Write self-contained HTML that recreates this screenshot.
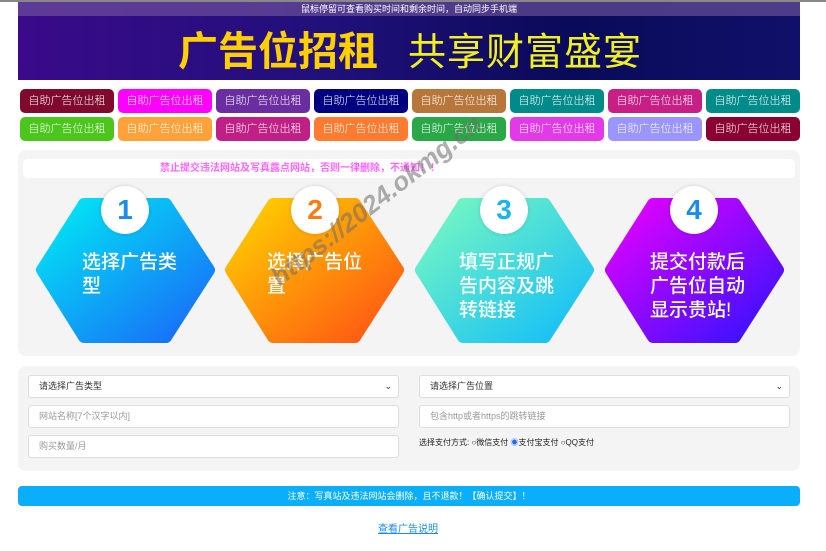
<!DOCTYPE html><html><head><meta charset="utf-8"><style>
*{box-sizing:border-box;margin:0;padding:0}
body{width:826px;height:551px;background:#fff;font-family:"Liberation Sans","Noto Sans CJK SC",sans-serif;position:relative;overflow:hidden}
.a{position:absolute}
.topline{left:0;top:0;width:826px;height:2px;background:#888}
.banner{left:18px;top:2px;width:782px;height:78px;background:linear-gradient(90deg,#3a0a8a,#20107a 40%,#0a0a5a 70%,#10106a);overflow:hidden}
.cap{left:0;top:0;width:782px;height:14px;background:rgba(120,90,160,.6);color:#fff;font-size:9px;text-align:center;line-height:14px}
.bt1{left:160px;top:17px;font-size:40px;font-weight:bold;color:#ffd000;letter-spacing:0px}
.bt2{left:390px;top:19px;font-size:38px;color:#f0f020;letter-spacing:1px}
.btn{position:absolute;width:94px;height:24px;border-radius:5px;color:#fff;font-size:11px;text-align:center;line-height:24px;font-weight:300}
.panel{background:#f4f4f4;border-radius:8px}
.hex{position:absolute}
.ht{position:absolute;color:#fff;font-size:19px;line-height:24px;font-weight:500}
.circ{position:absolute;width:48px;height:48px;border-radius:50%;background:#fff;text-align:center;line-height:48px;font-size:28px;font-weight:bold;box-shadow:0 0 4px rgba(0,0,0,.15)}
.in{position:absolute;height:23px;background:#fff;border:1px solid #ddd;border-radius:3px;font-size:9px;color:#999;line-height:21px;padding-left:10px}
</style></head><body>
<div class="a topline"></div>
<div class="a banner">
<div class="a cap">鼠标停留可查看购买时间和剩余时间，自动同步手机端</div>
<div class="a bt1">广告位招租</div>
<div class="a bt2">共享财富盛宴</div>
</div>
<div class="btn" style="left:20px;top:89px;background:#7f0a2d">自助广告位出租</div>
<div class="btn" style="left:118px;top:89px;background:#ff00ff">自助广告位出租</div>
<div class="btn" style="left:216px;top:89px;background:#6a2ea0">自助广告位出租</div>
<div class="btn" style="left:314px;top:89px;background:#000080">自助广告位出租</div>
<div class="btn" style="left:412px;top:89px;background:#b8773a">自助广告位出租</div>
<div class="btn" style="left:510px;top:89px;background:#008b8b">自助广告位出租</div>
<div class="btn" style="left:608px;top:89px;background:#c71f85">自助广告位出租</div>
<div class="btn" style="left:706px;top:89px;background:#008b8b">自助广告位出租</div>
<div class="btn" style="left:20px;top:117px;background:#4cc61c">自助广告位出租</div>
<div class="btn" style="left:118px;top:117px;background:#ffa23a">自助广告位出租</div>
<div class="btn" style="left:216px;top:117px;background:#c02085">自助广告位出租</div>
<div class="btn" style="left:314px;top:117px;background:#ff7b30">自助广告位出租</div>
<div class="btn" style="left:412px;top:117px;background:#2aa848">自助广告位出租</div>
<div class="btn" style="left:510px;top:117px;background:#e23ae6">自助广告位出租</div>
<div class="btn" style="left:608px;top:117px;background:#9b95ff">自助广告位出租</div>
<div class="btn" style="left:706px;top:117px;background:#8a0030">自助广告位出租</div>

<div class="a panel" style="left:18px;top:150px;width:782px;height:206px"></div>
<div class="a" style="left:23px;top:159px;width:772px;height:19px;background:#fff;border-radius:5px;color:#ff66ff;font-size:10px;font-weight:bold;line-height:19px;padding-left:137px">禁止提交违法网站及写真露点网站，否则一律删除，不通知！！</div>
<svg class="hex" style="left:0;top:0" width="826" height="360">
<defs>
<linearGradient id="g1" x1="0" y1="0" x2="1" y2="1"><stop offset="0" stop-color="#00ecf4"/><stop offset="1" stop-color="#1a66f8"/></linearGradient>
<linearGradient id="g2" x1="0" y1="0" x2="1" y2="1"><stop offset="0" stop-color="#ffd400"/><stop offset="1" stop-color="#ff5014"/></linearGradient>
<linearGradient id="g3" x1="0" y1="0" x2="1" y2="1"><stop offset="0" stop-color="#7afac0"/><stop offset="1" stop-color="#10bcfa"/></linearGradient>
<linearGradient id="g4" x1="0" y1="0" x2="1" y2="1"><stop offset="0" stop-color="#ea00ff"/><stop offset="1" stop-color="#3012ff"/></linearGradient>
</defs>
<g stroke-linejoin="round" stroke-width="12">
<polygon points="84,204 166,204 209,270 166,337 84,337 42,270" fill="url(#g1)" stroke="url(#g1)"/>
<polygon points="273,204 355,204 398,270 355,337 273,337 231,270" fill="url(#g2)" stroke="url(#g2)"/>
<polygon points="463,204 545,204 588,270 545,337 463,337 421,270" fill="url(#g3)" stroke="url(#g3)"/>
<polygon points="653,204 735,204 778,270 735,337 653,337 611,270" fill="url(#g4)" stroke="url(#g4)"/>
</g></svg>
<div class="circ" style="left:101px;top:186px;color:#1a8cf0">1</div>
<div class="circ" style="left:291px;top:186px;color:#ff7a10">2</div>
<div class="circ" style="left:480px;top:186px;color:#18b4f0">3</div>
<div class="circ" style="left:670px;top:186px;color:#1a8cf0">4</div>
<div class="ht" style="left:82px;top:251px">选择广告类<br>型</div>
<div class="ht" style="left:267px;top:251px">选择广告位<br>置</div>
<div class="ht" style="left:459px;top:251px">填写正规广<br>告内容及跳<br>转链接</div>
<div class="ht" style="left:650px;top:251px">提交付款后<br>广告位自动<br>显示贵站!</div>
<div class="a" style="left:265px;font-size:26px;color:rgba(110,110,110,.55);transform:rotate(-38deg);transform-origin:left top;font-style:italic;font-weight:bold;white-space:nowrap;top:268px">https://2024.okmg.cn</div>

<div class="a panel" style="left:18px;top:366px;width:782px;height:105px"></div>
<div class="in" style="left:28px;top:375px;width:371px;color:#333">请选择广告类型<span style="position:absolute;right:6px">⌄</span></div>
<div class="in" style="left:419px;top:375px;width:371px;color:#333">请选择广告位置<span style="position:absolute;right:6px">⌄</span></div>
<div class="in" style="left:28px;top:405px;width:371px">网站名称[7个汉字以内]</div>
<div class="in" style="left:419px;top:405px;width:371px">包含http或者https的跳转链接</div>
<div class="in" style="left:28px;top:435px;width:371px">购买数量/月</div>
<div class="a" style="left:419px;top:437px;font-size:8px;color:#222">选择支付方式: ○微信支付 <span style="color:#1a6cf0">◉</span>支付宝支付 ○QQ支付</div>
<div class="a" style="left:18px;top:486px;width:782px;height:20px;background:#0aaefa;border-radius:4px;color:#fff;font-size:9px;text-align:center;line-height:20px">注意：写真站及违法网站会删除，且不退款！【确认提交】！</div>
<div class="a" style="left:0;top:520px;width:816px;text-align:center;font-size:10px;color:#1a8cf0;text-decoration:underline">查看广告说明</div>
</body></html>
